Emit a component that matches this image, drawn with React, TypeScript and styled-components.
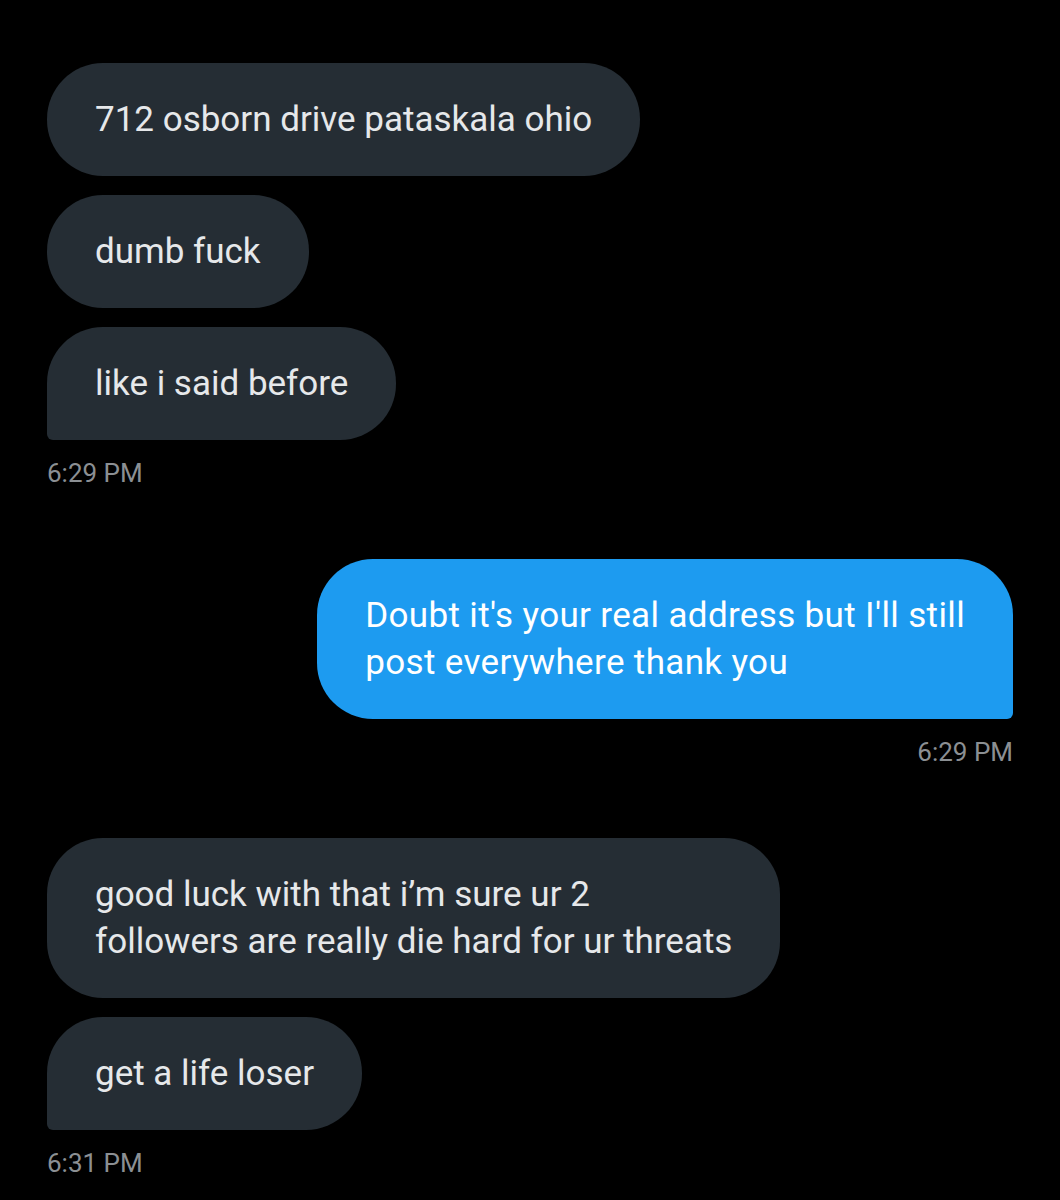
import styled, {createGlobalStyle} from 'styled-components';

const GlobalStyle = createGlobalStyle`
	html, body {
		margin     : 0;
		padding    : 0;
		background : #000000;
	}
	body {
		font-family : Roboto, "Liberation Sans", sans-serif;
	}
`;

const Thread = styled.div`
	display        : flex;
	flex-direction : column;
	width          : 1060px;
	min-height     : 1200px;
	box-sizing     : border-box;
	padding        : 63px 47px 0 47px;
	background     : #000000;
`;

const Group = styled.div<{ $mine?: boolean }>`
	display        : flex;
	flex-direction : column;
	align-items    : ${({$mine}) => $mine ? 'flex-end' : 'flex-start'};
	gap            : 19px;
`;

const Bubble = styled.div<{ $mine?: boolean; $last?: boolean }>`
	box-sizing     : border-box;
	padding        : 33px 48px;
	font-size      : 35px;
	line-height    : 47px;
	white-space    : nowrap;
	letter-spacing : ${({$mine}) => $mine ? '0.35px' : '0'};
	color          : ${({$mine}) => $mine ? '#ffffff' : '#e6e8ea'};
	background     : ${({$mine}) => $mine ? '#1d9bf0' : '#252d34'};
	border-radius  : ${({$mine, $last}) => !$last ? '56px' : $mine ? '56px 56px 6px 56px' : '56px 56px 56px 6px'};
`;

const Stamp = styled.div<{ $gapAfter: number }>`
	margin-bottom : ${({$gapAfter}) => $gapAfter}px;
	font-size     : 26px;
	line-height   : 28px;
	color         : #8b8f93;
`;

type Message = { text: string[] };

const ChatGroup = (props: { mine?: boolean; messages: Message[]; time: string; gapAfter: number }) => {
	const {mine, messages, time, gapAfter} = props;

	return <Group $mine={mine}>
		{messages.map((m, i) => <Bubble key={i} $mine={mine} $last={i === messages.length - 1}>
			{m.text.map((line, j) => <div key={j}>{line}</div>)}
		</Bubble>)}
		<Stamp $gapAfter={gapAfter}>{time}</Stamp>
	</Group>;
};

export default function App() {
	return <>
		<GlobalStyle/>
		<Thread>
			<ChatGroup
				messages={[
					{text: ['712 osborn drive pataskala ohio']},
					{text: ['dumb fuck']},
					{text: ['like i said before']}
				]}
				time="6:29 PM"
				gapAfter={72}/>
			<ChatGroup
				mine
				messages={[
					{text: ['Doubt it\'s your real address but I\'ll still', 'post everywhere thank you']}
				]}
				time="6:29 PM"
				gapAfter={72}/>
			<ChatGroup
				messages={[
					{text: ['good luck with that i’m sure ur 2', 'followers are really die hard for ur threats']},
					{text: ['get a life loser']}
				]}
				time="6:31 PM"
				gapAfter={0}/>
		</Thread>
	</>;
}
